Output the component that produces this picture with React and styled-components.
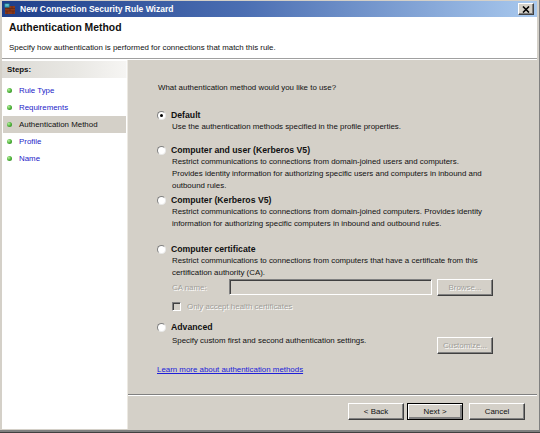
import styled, { createGlobalStyle } from "styled-components";

const GlobalStyle = createGlobalStyle`
  html, body {
    margin: 0;
    padding: 0;
    background: #d4d0c8;
  }
  body {
    font-family: "Liberation Sans", Arial, sans-serif;
    font-size: 7.9px;
    color: #111;
  }
`;

const steps = [
  { label: "Rule Type" },
  { label: "Requirements" },
  { label: "Authentication Method", current: true },
  { label: "Profile" },
  { label: "Name" },
];

const methods = [
  {
    key: "default",
    title: "Default",
    lines: ["Use the authentication methods specified in the profile properties."],
    checked: true,
    gap: 15,
  },
  {
    key: "user",
    title: "Computer and user (Kerberos V5)",
    lines: [
      "Restrict communications to connections from domain-joined users and computers.",
      "Provides identity information for authorizing specific users and computers in inbound and",
      "outbound rules.",
    ],
    gap: 11,
  },
  {
    key: "computer",
    title: "Computer (Kerberos V5)",
    lines: [
      "Restrict communications to connections from domain-joined computers.  Provides identity",
      "information for authorizing specific computers in inbound and outbound rules.",
    ],
    gap: 2,
  },
];

const FirewallIcon = () => (
  <svg width="12" height="12" viewBox="0 0 12 12">
    <rect x="1" y="3" width="10" height="8" fill="#8a3a1c" />
    <path d="M1 5.5h10M1 8h10M4 3v2.5M8 3v2.5M6 5.5V8M3 8v3M9 8v3" stroke="#5a2410" strokeWidth="0.6" />
    <rect x="0.5" y="0.5" width="5" height="4" rx="0.8" fill="#3aa0b8" stroke="#1b5f78" strokeWidth="0.6" />
    <path d="M1.5 2h3" stroke="#bff" strokeWidth="0.6" />
  </svg>
);

const App = () => (
  <>
    <GlobalStyle />
    <Window>
      <TitleBar>
        <FirewallIcon />
        <TitleText>New Connection Security Rule Wizard</TitleText>
        <CloseButton>
          <svg width="8" height="7" viewBox="0 0 8 7">
            <path d="M1 0.5l6 6M7 0.5l-6 6" stroke="#000" strokeWidth="1.6" />
          </svg>
        </CloseButton>
      </TitleBar>

      <Header>
        <HeaderTitle>Authentication Method</HeaderTitle>
        <HeaderText>Specify how authentication is performed for connections that match this rule.</HeaderText>
      </Header>

      <Body>
        <StepsPane>
          <StepsHeader>Steps:</StepsHeader>
          <StepList>
            {steps.map(({ label, current }) => (
              <StepItem key={label} current={current}>
                <StepDot />
                {label}
              </StepItem>
            ))}
          </StepList>
        </StepsPane>

        <ContentPane>
          <Main>
            <Question>What authentication method would you like to use?</Question>

            {methods.map(({ key, title, lines, checked, gap }) => (
              <Option key={key} gap={gap}>
                <OptionTitle>
                  <Radio checked={checked} />
                  {title}
                </OptionTitle>
                <OptionText>
                  {lines.map((line) => (
                    <div key={line}>{line}</div>
                  ))}
                </OptionText>
              </Option>
            ))}

            <Option gap={13}>
              <OptionTitle>
                <Radio />
                Computer certificate
              </OptionTitle>
              <OptionText>
                <div>Restrict communications to connections from computers that have a certificate from this</div>
                <div>certification authority (CA).</div>
              </OptionText>
              <FieldRow>
                <FieldLabel>CA name:</FieldLabel>
                <TextBox />
                <Button disabled>Browse...</Button>
              </FieldRow>
              <CheckRow>
                <CheckBox />
                Only accept health certificates
              </CheckRow>
            </Option>

            <Option gap={9}>
              <OptionTitle>
                <Radio />
                Advanced
              </OptionTitle>
              <SettingsRow>
                <span>Specify custom first and second authentication settings.</span>
                <Button disabled>Customize...</Button>
              </SettingsRow>
            </Option>

            <LearnMore href="#">Learn more about authentication methods</LearnMore>
          </Main>

          <ButtonBar>
            <Button>&lt; Back</Button>
            <Button primary>Next &gt;</Button>
            <Button spaced>Cancel</Button>
          </ButtonBar>
        </ContentPane>
      </Body>
    </Window>
  </>
);

export default App;

const Window = styled.div`
  width: 540px;
  height: 433px;
  box-sizing: border-box;
  padding: 1px 3px 3px 2px;
  background: #d4d0c8;
  border-bottom: 1px solid #404040;
  box-shadow: inset -1px 0 0 #808080, inset 0 -2px 0 #808080;
  display: flex;
  flex-direction: column;
  overflow: hidden;
`;

const TitleBar = styled.div`
  height: 16px;
  flex: none;
  display: flex;
  align-items: center;
  gap: 4px;
  padding: 0 3px 0 2px;
  background: linear-gradient(to right, #1f3f8a 0%, #4b6eb2 45%, #a9c9ee 100%);
`;

const TitleText = styled.span`
  flex: 1;
  color: #fff;
  font-weight: bold;
  font-size: 8.5px;
  white-space: nowrap;
`;

const CloseButton = styled.span`
  width: 16px;
  height: 12px;
  box-sizing: border-box;
  display: flex;
  align-items: center;
  justify-content: center;
  background: #d4d0c8;
  border: 1px solid;
  border-color: #fff #404040 #404040 #fff;
  box-shadow: inset -1px -1px 0 #808080;
`;

const Header = styled.div`
  height: 42px;
  flex: none;
  box-sizing: border-box;
  background: #fff;
  padding: 4px 0 0 7px;
  border-bottom: 1px solid #a0a0a0;
  box-shadow: 0 1px 0 #fff;
  margin-bottom: 1px;
`;

const HeaderTitle = styled.div`
  font-weight: bold;
  font-size: 10.4px;
  line-height: 14px;
`;

const HeaderText = styled.div`
  margin-top: 7px;
  line-height: 12px;
  white-space: nowrap;
`;

const Body = styled.div`
  flex: 1;
  display: flex;
  min-height: 0;
`;

const StepsPane = styled.div`
  width: 125px;
  flex: none;
  background: #fff;
  border-right: 1px solid #ece9e2;
  display: flex;
  flex-direction: column;
`;

const StepsHeader = styled.div`
  height: 17px;
  margin-top: 1px;
  display: flex;
  align-items: center;
  padding-left: 5px;
  font-weight: bold;
  background: linear-gradient(to right, #dcdad5 0%, #e9e8e4 60%, #f6f5f3 100%);
  border-right: 1px solid #fafafa;
`;

const StepList = styled.div`
  padding: 4px 1px 0 1px;
  display: flex;
  flex-direction: column;
`;

const StepItem = styled.div`
  height: 17px;
  display: flex;
  align-items: center;
  gap: 7px;
  padding-left: 4px;
  white-space: nowrap;
  color: ${(p) => (p.current ? "#111" : "#2424c8")};
  background: ${(p) => (p.current ? "#d4d0c8" : "transparent")};
`;

const StepDot = styled.span`
  width: 5px;
  height: 5px;
  border-radius: 50%;
  flex: none;
  background: radial-gradient(circle at 35% 35%, #b8f0a0 0%, #4fb33a 50%, #2a7a1e 100%);
`;

const ContentPane = styled.div`
  flex: 1;
  display: flex;
  flex-direction: column;
`;

const Main = styled.div`
  flex: 1;
  padding: 22px 44px 0 29px;
  display: flex;
  flex-direction: column;
  border-bottom: 1px solid #808080;
  box-shadow: 0 1px 0 #fff;
`;

const Question = styled.div`
  line-height: 12px;
  padding-left: 1px;
`;

const Option = styled.div`
  margin-top: ${(p) => p.gap}px;
  display: flex;
  flex-direction: column;
`;

const OptionTitle = styled.div`
  display: flex;
  align-items: center;
  gap: 5px;
  height: 12px;
  font-weight: bold;
  font-size: 8.7px;
  white-space: nowrap;
`;

const Radio = styled.span`
  width: 9px;
  height: 9px;
  box-sizing: border-box;
  flex: none;
  border-radius: 50%;
  background: #fff;
  border: 1px solid;
  border-color: #808080 #e8e8e8 #e8e8e8 #808080;
  display: flex;
  align-items: center;
  justify-content: center;

  &::after {
    content: "";
    width: 3px;
    height: 3px;
    border-radius: 50%;
    background: ${(p) => (p.checked ? "#000" : "transparent")};
  }
`;

const OptionText = styled.div`
  padding-left: 15px;
  line-height: 12px;
  white-space: nowrap;
`;

const FieldRow = styled.div`
  display: flex;
  align-items: center;
  gap: 5px;
  height: 16px;
  padding-left: 15px;
`;

const FieldLabel = styled.span`
  width: 52px;
  color: #a09e99;
  text-shadow: 1px 1px 0 #fff;
`;

const TextBox = styled.span`
  flex: 1;
  height: 16px;
  box-sizing: border-box;
  background: #d4d0c8;
  border: 1px solid;
  border-color: #808080 #fff #fff #808080;
  box-shadow: inset 1px 1px 0 #404040;
`;

const CheckRow = styled.div`
  margin-top: 5px;
  height: 12px;
  display: flex;
  align-items: center;
  gap: 6px;
  padding-left: 15px;
  color: #a09e99;
  text-shadow: 1px 1px 0 #fff;
`;

const CheckBox = styled.span`
  width: 9px;
  height: 9px;
  box-sizing: border-box;
  background: #d4d0c8;
  border: 1px solid;
  border-color: #808080 #fff #fff #808080;
  box-shadow: inset 1px 1px 0 #404040;
`;

const SettingsRow = styled.div`
  margin-top: 2px;
  padding-left: 15px;
  display: flex;
  justify-content: space-between;
  align-items: flex-start;
  line-height: 12px;

  & > button {
    margin-top: 2px;
  }
`;

const LearnMore = styled.a`
  margin-top: 10px;
  line-height: 12px;
  color: #2020d8;
  text-decoration: underline;
  align-self: flex-start;
`;

const ButtonBar = styled.div`
  height: 34px;
  flex: none;
  box-sizing: border-box;
  padding: 8px 12px 0 0;
  display: flex;
  justify-content: flex-end;
  align-items: flex-start;
  gap: 3px;
`;

const Button = styled.button`
  width: 56px;
  height: 17px;
  box-sizing: border-box;
  padding: 0;
  margin-left: ${(p) => (p.spaced ? "3px" : "0")};
  font-family: inherit;
  font-size: 7.9px;
  background: #d4d0c8;
  border: 1px solid;
  border-color: ${(p) => (p.primary ? "#000" : "#fff #404040 #404040 #fff")};
  box-shadow: ${(p) =>
    p.primary
      ? "inset 1px 1px 0 #fff, inset -2px -2px 0 #808080"
      : "inset -1px -1px 0 #808080"};
  color: #111;

  &:disabled {
    color: #a09e99;
    text-shadow: 1px 1px 0 #fff;
  }
`;
